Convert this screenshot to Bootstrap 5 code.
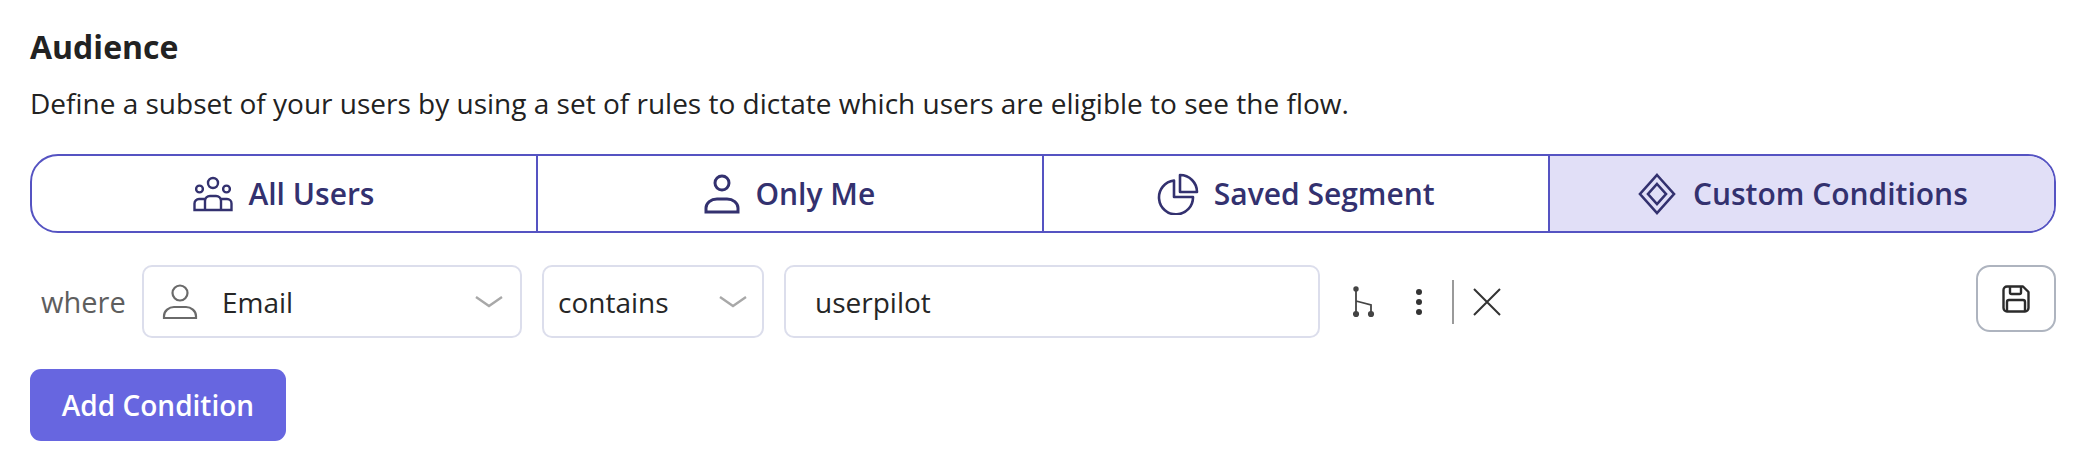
<!DOCTYPE html>
<html lang="en">
<head>
    <meta charset="UTF-8">
    <title>Audience</title>
    <link href="https://cdn.jsdelivr.net/npm/bootstrap@5.3.0/dist/css/bootstrap.min.css" rel="stylesheet">
    <style>
        body {
            background: #fff;
            color: #222;
            font-family: "Open Sans", "Noto Sans", sans-serif;
            margin: 0;
            overflow: hidden;
        }

        .page-wrap {
            padding: 26px 30px 0;
        }

        .aud-title {
            font-size: 32px;
            font-weight: 700;
            line-height: 42px;
            margin: 0 0 16px;
            color: #222;
        }

        .aud-desc {
            font-size: 28px;
            line-height: 38px;
            margin: 0 0 32px;
        }

        /* Tabs */
        .aud-tabs {
            height: 79px;
            border: 2px solid #5553c2;
            border-radius: 28px;
            overflow: hidden;
        }

        .aud-tab {
            flex: 0 0 calc(25% + 0.4px);
            color: #33316f;
            font-size: 30px;
            font-weight: 600;
            gap: 15px;
            border-right: 2px solid #5553c2;
        }

        .aud-tab:last-child {
            flex: 1 1 0;
            border-right: 0;
            background: #e1dff7;
        }

        /* Condition row */
        .cond-row {
            margin-top: 32px;
            height: 73px;
        }

        .cond-where {
            width: 112px;
            padding-left: 11px;
            color: #5e5e5e;
            font-size: 29px;
        }

        .cond-box {
            height: 73px;
            border: 2px solid #dcdeec;
            border-radius: 10px;
            font-size: 28px;
            color: #262626;
            background: #fff;
        }

        .box-email {
            width: 380px;
            margin-right: 20px;
            padding: 0 17px 0 18px;
        }

        .box-op {
            width: 222px;
            margin-right: 20px;
            padding: 0 15px 0 14px;
        }

        .box-val {
            width: 536px;
            padding: 0 29px;
        }

        .cond-tools {
            margin-left: 33px;
        }

        .tool-branch {
            margin-right: 40px;
        }

        .tool-sep {
            width: 2px;
            height: 44px;
            background: #9a9a9a;
            margin: 0 18px 0 29px;
        }

        .save-btn {
            width: 80px;
            height: 67px;
            border: 2px solid #aeb4bf;
            border-radius: 14px;
            background: #fff;
            padding: 0;
        }

        .add-btn {
            margin-top: 31px;
            width: 256px;
            height: 72px;
            background: #6766e0;
            border: 0;
            border-radius: 11px;
            color: #fff;
            font-size: 28px;
            font-weight: 600;
        }

        .add-btn:hover {
            background: #5553c2;
            color: #fff;
        }
    </style>
</head>
<body>

    <div class="page-wrap">
        <h2 class="aud-title">Audience</h2>
        <p class="aud-desc">Define a subset of your users by using a set of rules to dictate which users are eligible to see the flow.</p>

        <div class="aud-tabs d-flex">
            <div class="aud-tab d-flex align-items-center justify-content-center">
                <svg width="40" height="36" viewBox="0 0 40 36" fill="none" stroke="#33316f" stroke-width="2.4"><circle cx="20" cy="7" r="5"/><circle cx="6.5" cy="13" r="3.4"/><circle cx="33.5" cy="13" r="3.4"/><path d="M12 34V25a5 5 0 0 1 5-5h6a5 5 0 0 1 5 5v9"/><path d="M12 23H6a4.500 4.500 0 0 0-4.500 4.500V34h37v-6.500A4.500 4.500 0 0 0 34 23h-6"/></svg>
                <span>All Users</span>
            </div>
            <div class="aud-tab d-flex align-items-center justify-content-center">
                <svg width="36" height="40" viewBox="0 0 36 40" fill="none" stroke="#33316f" stroke-width="3"><circle cx="18" cy="9" r="7"/><path d="M2 38v-4c0-5 5-9 11-9h10c6 0 11 4 11 9v4z"/></svg>
                <span>Only Me</span>
            </div>
            <div class="aud-tab d-flex align-items-center justify-content-center">
                <svg width="42" height="42" viewBox="0 0 42 42" fill="none" stroke="#33316f" stroke-width="2.6" stroke-linejoin="round"><path d="M17 7.500A17 17 0 1 0 36 24H17z"/><path d="M23 2a17 17 0 0 1 17 17H23z"/></svg>
                <span>Saved Segment</span>
            </div>
            <div class="aud-tab d-flex align-items-center justify-content-center">
                <svg width="42" height="42" viewBox="0 0 42 42" fill="none" stroke="#33316f" stroke-width="2.6"><path d="M21 2l17 19-17 19L4 21z"/><path d="M21 11l9 10-9 10-9-10z"/></svg>
                <span>Custom Conditions</span>
            </div>
        </div>

        <div class="cond-row d-flex align-items-center">
            <div class="cond-where">where</div>
            <div class="cond-box box-email d-flex align-items-center">
                <svg class="me-4" width="36" height="36" viewBox="0 0 36 36" fill="none" stroke="#6a6a6a" stroke-width="2.2"><circle cx="18" cy="9" r="7.500"/><path d="M2 34v-2c0-5 5-9 10-9h12c5 0 10 4 10 9v2z"/></svg>
                <span class="flex-grow-1">Email</span>
                <svg width="28" height="14" viewBox="0 0 28 14" fill="none" stroke="#a8a8a8" stroke-width="2.400"><path d="M1 2l13 9 13-9"/></svg>
            </div>
            <div class="cond-box box-op d-flex align-items-center">
                <span class="flex-grow-1">contains</span>
                <svg width="28" height="14" viewBox="0 0 28 14" fill="none" stroke="#a8a8a8" stroke-width="2.400"><path d="M1 2l13 9 13-9"/></svg>
            </div>
            <div class="cond-box box-val d-flex align-items-center">userpilot</div>

            <div class="cond-tools d-flex align-items-center">
                <svg class="tool-branch" width="22" height="32" viewBox="0 0 22 32" fill="none" stroke="#444" stroke-width="1.800"><path d="M3 3v26M3 15l15 4v9"/><circle cx="3" cy="3" r="1.800" fill="#444"/><circle cx="3" cy="28" r="2.200" fill="#444"/><circle cx="18" cy="28" r="2.200" fill="#444"/></svg>
                <svg width="8" height="28" viewBox="0 0 8 28" fill="#333"><circle cx="4" cy="4" r="3"/><circle cx="4" cy="14" r="3"/><circle cx="4" cy="24" r="3"/></svg>
                <div class="tool-sep"></div>
                <svg width="30" height="30" viewBox="0 0 30 30" fill="none" stroke="#333" stroke-width="2"><path d="M2 2l26 26M28 2L2 28"/></svg>
            </div>

            <button class="save-btn ms-auto align-self-start d-flex align-items-center justify-content-center" type="button">
                <svg width="28" height="28" viewBox="0 0 28 28" fill="none" stroke="#2b2b2b" stroke-width="2.400" stroke-linejoin="round"><path d="M5 1.500h16l5.500 5.500v16a3.500 3.500 0 0 1-3.500 3.500H5A3.500 3.500 0 0 1 1.500 23V5A3.500 3.500 0 0 1 5 1.500z"/><path d="M8 1.500v6a1.500 1.500 0 0 0 1.500 1.500h8a1.500 1.500 0 0 0 1.500-1.500v-6"/><path d="M5 26.500V17a2 2 0 0 1 2-2h14a2 2 0 0 1 2 2v9.500"/></svg>
            </button>
        </div>

        <button class="btn add-btn" type="button">Add Condition</button>
    </div>

    <script src="https://cdn.jsdelivr.net/npm/bootstrap@5.3.0/dist/js/bootstrap.bundle.min.js"></script>
</body>
</html>
